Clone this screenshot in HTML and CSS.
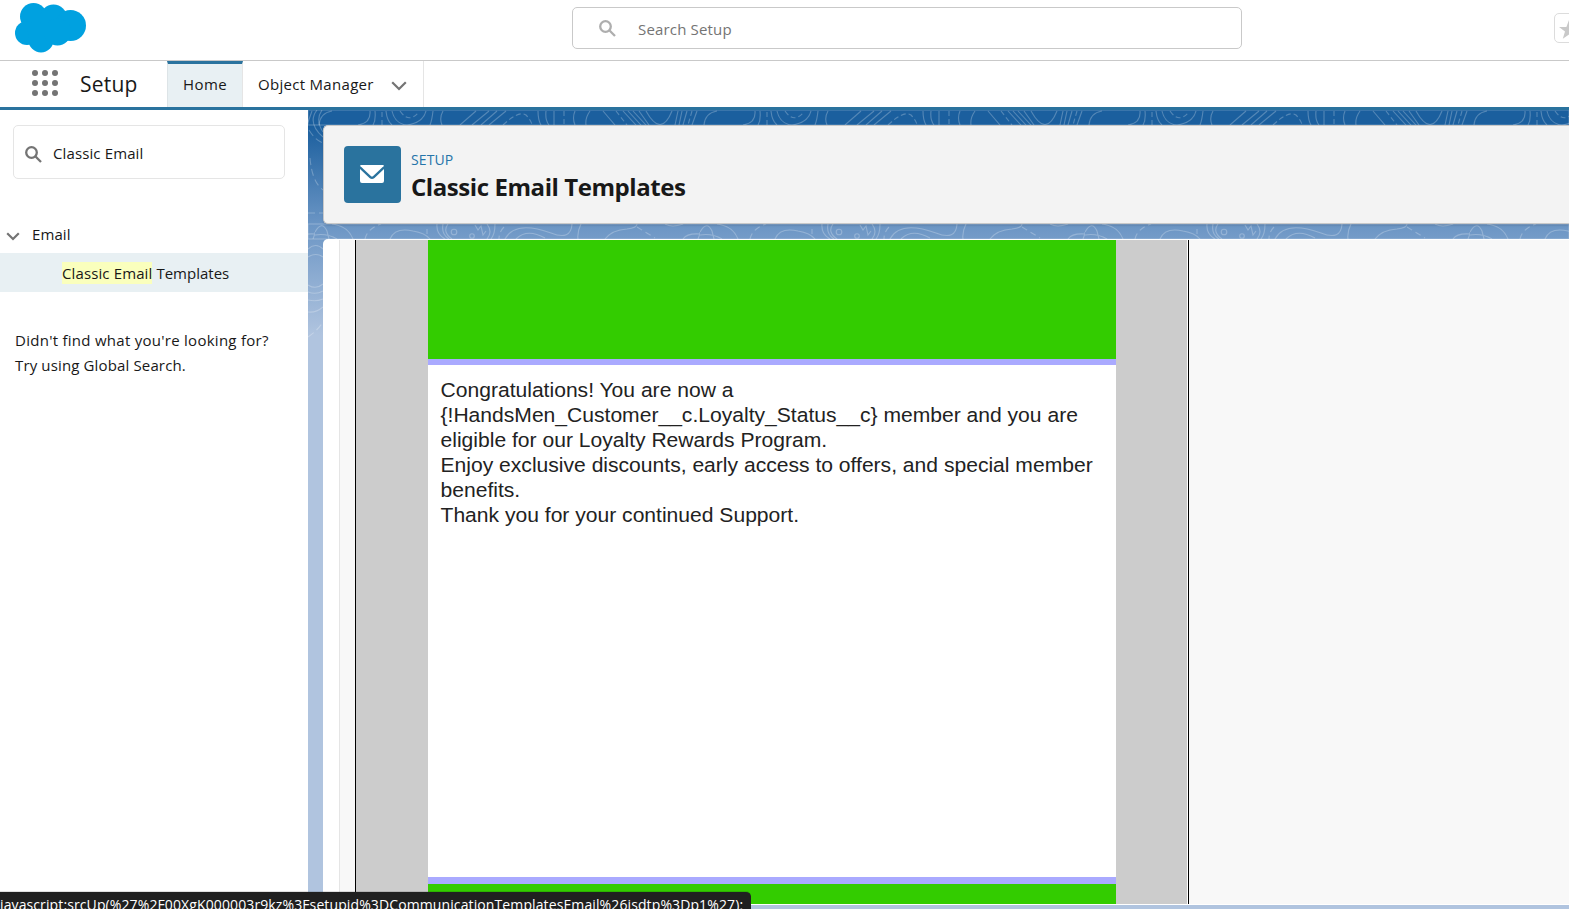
FILE: index.html
```html
<!DOCTYPE html>
<html lang="en">
<head>
<meta charset="utf-8">
<title>Classic Email Templates | Setup</title>
<link rel="stylesheet" href="styles.css">
</head>
<body>
<div class="app">
  <header class="global-header">
    <svg class="logo" viewBox="0 0 72 50" width="72" height="50"><g fill="#00a1e0"><circle cx="18.500" cy="13.500" r="13.500"/><circle cx="38.500" cy="15" r="13.500"/><circle cx="55.500" cy="22.500" r="15.500"/><circle cx="12" cy="30" r="12"/><circle cx="26" cy="37" r="12.500"/><circle cx="42.500" cy="29" r="13.500"/><path d="M10 20h40v12H14z"/></g></svg>
    <div class="global-search">
      <svg class="ico-search" viewBox="0 0 17 17" width="17" height="17"><circle cx="6.500" cy="6.500" r="5.300"/><path d="M10.300 10.300l5.700 5.700"/></svg>
      <span class="t-search">Search Setup</span>
    </div>
    <div class="favorite"><svg viewBox="0 0 20 20" width="20" height="20"><path fill="#c9c9c9" d="M10 0l2.600 7H20l-6 4.400 2.200 7.400L10 14.500l-6.200 4.300L6 11.400 0 7h7.400z"/></svg></div>
  </header>
  <nav class="context-bar">
    <svg class="waffle" viewBox="0 0 26 26" width="26" height="26"><g fill="#747474"><circle cx="3" cy="3" r="3"/><circle cx="13" cy="3" r="3"/><circle cx="23" cy="3" r="3"/><circle cx="3" cy="13" r="3"/><circle cx="13" cy="13" r="3"/><circle cx="23" cy="13" r="3"/><circle cx="3" cy="23" r="3"/><circle cx="13" cy="23" r="3"/><circle cx="23" cy="23" r="3"/></g></svg>
    <span class="app-name">Setup</span>
    <div class="tab active"><span class="t-home">Home</span></div>
    <div class="tab object"><span class="t-object">Object Manager</span><svg class="chevron" viewBox="0 0 16 10" width="16" height="10"><path d="M1.200 1.200L8 8l6.800-6.800"/></svg></div>
  </nav>
  <div class="body">
    <aside class="sidebar">
      <div class="quick-find">
        <svg class="ico-search dark" viewBox="0 0 17 17" width="17" height="17"><circle cx="6.500" cy="6.500" r="5.300"/><path d="M10.300 10.300l5.700 5.700"/></svg>
        <span class="t-find">Classic Email</span>
      </div>
      <div class="tree-head"><svg class="chevron small" viewBox="0 0 14 9" width="14" height="9"><path d="M1.200 1.200L7 7l5.800-5.800"/></svg><span class="t-email">Email</span></div>
      <div class="tree-item"><mark class="t-mark">Classic Email</mark><span class="t-templates">Templates</span></div>
      <p class="hint"><span class="t-hint1">Didn't find what you're looking for?</span><br><span class="t-hint2">Try using Global Search.</span></p>
    </aside>
    <main class="workspace">
      <svg class="contours" width="1261" height="260" viewBox="0 0 1261 260">
        <defs>
          <pattern id="top" x="7" y="0" width="385" height="15" patternUnits="userSpaceOnUse">
            <path d="M17 1Q5 3 4 15M55 1Q56 13 43 15M60 1Q61 10 58 15M71 1Q72 11 77 15M77 1Q80 14 92 15Q108 13 111 1M118 1Q117 10 115 15M128 1Q124 8 127 15M161 1L145 15M174 1L157 15M182 1L166 15M191 1L174 15M223 1Q223 10 226 15M231 1Q230 10 234 15M239 1V15M260 1Q257 8 260 15M275 1Q270 8 271 15M288 1L300 15M308 1L321 15M313 1L326 15M318 1L331 15M324 1L334 15M331 1Q346 28 357 1M363 1L360 15M367 1L364 15M372 1L368 15M382 1L377 15"/>
            <path stroke-dasharray="5 3" d="M67 2V15M85 1Q94 14 104 2M188 15Q204 0 211 5Q216 10 217 15M249 1V15M301 1L312 15M377 1L373 15"/>
          </pattern>
          <pattern id="middle" x="7" y="114" width="385" height="15" patternUnits="userSpaceOnUse">
            <path d="M0 8Q7 -4 12 7L14 15M17 0Q33 2 38 15M0 11Q12 9 22 15M75 15Q80 3 98 7Q110 9 115 15M112 5V10M122 0Q121 10 130 15M128 0Q126 10 134 15M133 0Q127 8 137 15M160 1L163 6L166 2L168 11L171 7M172 0Q178 8 172 15M180 0Q180 10 176 15M190 15Q200 -4 236 9Q256 17 257 0M201 15Q212 4 230 14M266 0Q262 8 263 15M290 15Q297 6 312 5Q322 4 322 0M350 0Q357 4 368 0M368 15Q372 9 385 10M383 15Q385 10 385 8"/>
            <circle cx="139" cy="8" r="2.800"/><circle cx="157" cy="12" r="2.300"/>
            <path stroke-dasharray="6 4" d="M50 15Q52 5 66 0M189 3Q184 8 184 15M322 3L340 14"/>
          </pattern>
        </defs>
        <rect width="1261" height="15" fill="url(#top)"/>
        <rect y="114" width="1261" height="15" fill="url(#middle)"/>
        <path d="M9 0Q-1 13 15 27M14 0Q7 10 15 22M0 139Q8 132 15 139M0 147Q8 142 15 147M0 175Q8 180 15 174M0 182Q8 185 15 181M0 190Q8 192 15 189M0 202Q8 203 15 197"/>
        <path stroke-dasharray="7 4" d="M1 20Q7 30 15 33M2 48Q4 72 15 80M0 103H15M0 227Q10 220 15 212"/>
      </svg>
      <section class="page-header">
        <div class="page-icon"><svg viewBox="0 0 24 18" width="24" height="18"><path fill="#fff" d="M.5 0h23q.5.300 0 1.200L13.200 11q-1.200 1-2.400 0L.5 1.200Q0 .300.5 0z"/><path fill="#fff" d="M0 4l9.500 9q2.500 2 5 0L24 4v12q0 2-2 2H2q-2 0-2-2z"/></svg></div>
        <div class="titles"><span class="t-eyebrow">SETUP</span><h1><span class="t-title">Classic Email Templates</span></h1></div>
      </section>
      <section class="content">
        <div class="frame">
          <div class="preview">
            <div class="letter">
              <div class="band head"></div>
              <div class="letter-body">
                <span class="l1">Congratulations! You are now a</span><br>
                <span class="l2">{!HandsMen_Customer__c.Loyalty_Status__c} member and you are</span><br>
                <span class="l3">eligible for our Loyalty Rewards Program.</span><br>
                <span class="l4">Enjoy exclusive discounts, early access to offers, and special member</span><br>
                <span class="l5">benefits.</span><br>
                <span class="l6">Thank you for your continued Support.</span>
              </div>
              <div class="band foot"></div>
            </div>
          </div>
        </div>
      </section>
    </main>
  </div>
  <div class="status"><span class="t-status">javascript:srcUp(%27%2F00XgK000003r9kz%3Fsetupid%3DCommunicationTemplatesEmail%26isdtp%3Dp1%27);</span></div>
</div>
</body>
</html>
```
FILE: styles.css
```css
* { box-sizing: border-box; }
body { margin: 0; overflow: hidden; font-family: "Open Sans", "Noto Sans", sans-serif; font-size: 15px; color: #181818; background: #fff; }
.app { position: relative; width: 1569px; height: 909px; overflow: hidden; display: flex; flex-direction: column; }
span, mark { white-space: nowrap; }
svg { display: block; flex: none; }

.global-header { height: 61px; flex: none; display: flex; align-items: flex-start; border-bottom: 1px solid #c9c9c9; overflow: hidden; }
.logo { margin: 3px 0 0 15px; }
.global-search { flex: none; display: flex; align-items: center; width: 670px; height: 42px; margin: 7px 0 0 485px; padding-left: 26px; gap: 22px; border: 1px solid #c9c9c9; border-radius: 5px; color: #747474; }
.ico-search { fill: none; stroke: #aeaeae; stroke-width: 2.3; }
.ico-search.dark { stroke: #747474; margin-top: 1px; }
.t-search { line-height: 20px; padding-top: 1px; letter-spacing: .17px; }
.favorite { flex: none; width: 38px; height: 30px; margin: 13px 0 0 312px; padding: 6px 0 0 4px; border: 1px solid #dcdcdc; border-radius: 5px; }

.context-bar { height: 49px; flex: none; display: flex; align-items: stretch; border-bottom: 3px solid #2a739e; }
.waffle { margin: 9px 0 0 32px; }
.app-name { width: 87px; margin-left: 22px; font-size: 21px; line-height: 46px; letter-spacing: .2px; }
.tab { display: flex; align-items: center; border-right: 1px solid #e5e5e5; line-height: 44px; }
.tab.active { width: 76px; padding: 0 0 3px 15px; background: #e8f0f3; border-top: 3px solid #2a739e; border-left: 1px solid #dde4e7; }
.t-home { letter-spacing: .4px; }
.tab.object { width: 181px; padding-left: 15px; justify-content: space-between; padding-right: 16px; }
.t-object { letter-spacing: .3px; }
.chevron { fill: none; stroke: #747474; stroke-width: 2.2; }
.tab .chevron { margin-top: 4px; }

.body { flex: 1; min-height: 0; display: flex; }
.sidebar { width: 308px; flex: none; padding-top: 15px; background: #fff; }
.quick-find { display: flex; align-items: center; gap: 11px; width: 272px; height: 54px; margin-left: 13px; padding: 4px 0 0 11px; border: 1px solid #e5e5e5; border-radius: 5px; }
.t-find { margin-top: -2px; letter-spacing: .12px; }
.tree-head { display: flex; align-items: center; gap: 12px; height: 36px; margin-top: 38px; padding-left: 6px; }
.tree-head .chevron { margin-top: 2px; }
.t-email { margin-top: -2px; letter-spacing: .1px; }
.tree-item { display: flex; align-items: center; gap: 4px; height: 39px; padding: 1px 0 0 62px; background: #e8f0f3; }
mark { background: #faffbd; color: inherit; line-height: 22px; height: 22px; letter-spacing: .12px; }
.hint { margin: 36px 0 0 15px; line-height: 25px; }
.t-hint1 { letter-spacing: .27px; }
.t-hint2 { letter-spacing: .14px; }

.workspace { position: relative; flex: 1; min-width: 0; display: flex; flex-direction: column; gap: 15px; padding: 15px 0 4px 15px; overflow: hidden; background: linear-gradient(#1b5f9e 0, #1b5f9e 17px, #6c96c5 116px, #b0c4df 225px); }
.contours { position: absolute; left: 0; top: 0; fill: none; stroke: #fff; stroke-opacity: .25; stroke-width: 1.1; }
.page-header { position: relative; height: 99px; flex: none; display: flex; padding: 20px 0 0 20px; gap: 10px; background: #f3f3f3; border: 1px solid #c9c9c9; border-right: 0; border-radius: 5px 0 0 5px; box-shadow: 0 2px 2px rgba(0, 0, 0, .1); }
.page-icon { width: 57px; height: 57px; display: flex; align-items: center; justify-content: center; background: #2a739e; border-radius: 4px; }
.page-icon svg { margin: -2px 1px 0 0; }
.titles { line-height: 20px; padding-top: 4px; }
.t-eyebrow { display: block; color: #2574a9; font-size: 14px; letter-spacing: .1px; }
h1 { margin: 0; font-size: 24px; line-height: 34px; font-weight: 700; letter-spacing: -.43px; }
.content { position: relative; flex: 1; min-height: 0; padding: 1px 0 1px 16px; background: #fff; border-radius: 5px 0 0 0; }
.frame { height: 100%; padding-left: 15px; border-left: 1px solid #e5e5e5; background: #f8f8f8; }
.preview { width: 834px; height: 100%; padding: 0 71px 0 72px; border: solid #000; border-width: 0 1px; background: linear-gradient(90deg, #ccc 831px, #fff 831px); }
.letter { width: 688px; height: 100%; display: flex; flex-direction: column; }
.band { background: #3c0; flex: none; }
.band.head { height: 125px; border-bottom: 6px solid #aaf; }
.band.foot { height: 27px; border-top: 7px solid #aaf; }
.letter-body { flex: 1; padding: 12px 12.5px; background: #fff; color: #222; font: 21.08px/25px "Liberation Sans", Arial, sans-serif; }
.status { position: absolute; left: 0; bottom: 0; width: 751px; height: 18px; overflow: hidden; background: #202020; background-clip: padding-box; border-top: 1px solid rgba(0, 0, 0, .12); border-radius: 0 5px 0 0; color: #fff; font-size: 14px; line-height: 26px; letter-spacing: .11px; }
```
